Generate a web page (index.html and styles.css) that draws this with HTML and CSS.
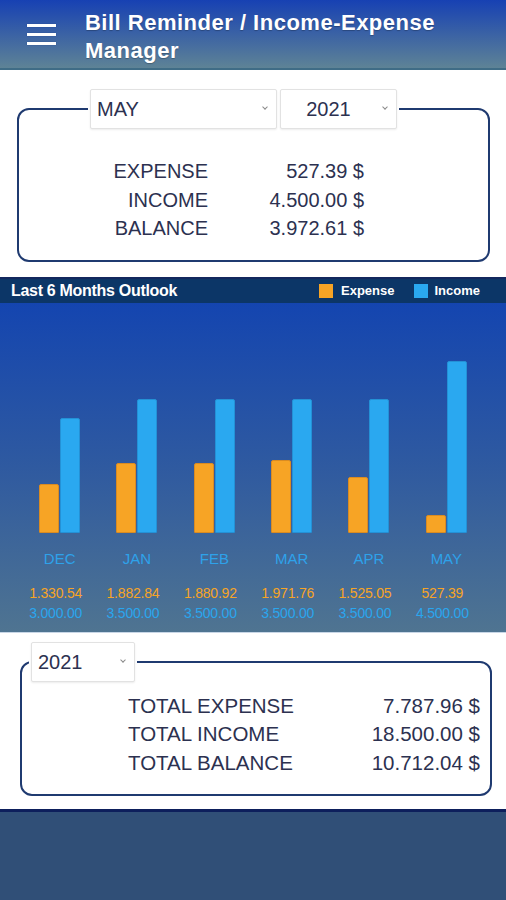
FILE: index.html
```html
<!DOCTYPE html>
<html lang="en">
<head>
  <meta charset="UTF-8">
  <meta name="viewport" content="width=device-width, initial-scale=1.0">
  <title>Bill Reminder / Income-Expense Manager</title>
  <link rel="stylesheet" href="styles.css">
</head>
<body>
  <header class="topbar">
    <div class="burger"><span></span><span></span><span></span></div>
    <h1>Bill Reminder / Income-Expense Manager</h1>
  </header>

  <section class="month-sec">
    <fieldset class="box box-month">
      <legend>
        <label class="pick pick-month">
          <select>
            <option>JAN</option><option>FEB</option><option>MAR</option>
            <option>APR</option><option selected>MAY</option><option>JUN</option>
          </select>
        </label>
        <label class="pick pick-year">
          <select><option>2020</option><option selected>2021</option></select>
        </label>
      </legend>
      <div class="sum sum-month">
        <span>EXPENSE</span><span>527.39 $</span>
        <span>INCOME</span><span>4.500.00 $</span>
        <span>BALANCE</span><span>3.972.61 $</span>
      </div>
    </fieldset>
  </section>

  <section class="outlook">
    <div class="outlook-head">
      <h2>Last 6 Months Outlook</h2>
      <div class="legend">
        <i class="dot dot-exp"></i><span>Expense</span>
        <i class="dot dot-inc"></i><span>Income</span>
      </div>
    </div>
    <div class="chart" id="chart"></div>
  </section>

  <section class="year-sec">
    <fieldset class="box box-year">
      <legend>
        <label class="pick pick-total">
          <select><option>2020</option><option selected>2021</option></select>
        </label>
      </legend>
      <div class="sum sum-year">
        <span>TOTAL EXPENSE</span><span>7.787.96 $</span>
        <span>TOTAL INCOME</span><span>18.500.00 $</span>
        <span>TOTAL BALANCE</span><span>10.712.04 $</span>
      </div>
    </fieldset>
  </section>

  <footer class="bottom"></footer>

  <script>
    const bulan = [
      { name: 'DEC', exp: 1330.54, inc: 3000, expTxt: '1.330.54', incTxt: '3.000.00' },
      { name: 'JAN', exp: 1882.84, inc: 3500, expTxt: '1.882.84', incTxt: '3.500.00' },
      { name: 'FEB', exp: 1880.92, inc: 3500, expTxt: '1.880.92', incTxt: '3.500.00' },
      { name: 'MAR', exp: 1971.76, inc: 3500, expTxt: '1.971.76', incTxt: '3.500.00' },
      { name: 'APR', exp: 1525.05, inc: 3500, expTxt: '1.525.05', incTxt: '3.500.00' },
      { name: 'MAY', exp: 527.39, inc: 4500, expTxt: '527.39', incTxt: '4.500.00' }
    ];

    // skala tinggi bar (px per unit)
    const skala = 0.0382;
    const chart = document.getElementById('chart');

    bulan.forEach(item => {
      chart.innerHTML += `<div class="col">
        <div class="bars">
          <div class="bar bar-exp" style="height:${Math.round(item.exp * skala) - 2}px"></div>
          <div class="bar bar-inc" style="height:${Math.round(item.inc * skala)}px"></div>
        </div>
        <div class="mname">${item.name}</div>
        <div class="val val-exp">${item.expTxt}</div>
        <div class="val val-inc">${item.incTxt}</div>
      </div>`;
    });
  </script>
</body>
</html>
```

FILE: styles.css
```css
body {
  margin: 0;
  font-family: "Liberation Sans", Arial, sans-serif;
  background-color: #ffffff;
  color: #2c3150;
}

/* header */
.topbar {
  height: 68px;
  display: flex;
  align-items: center;
  background: linear-gradient(to bottom, #1741b3, #5e8396);
  border-bottom: 2px solid #3f6c86;
}
.burger {
  width: 31px;
  margin-left: 27px;
  margin-right: 29px;
  display: flex;
  flex-direction: column;
  gap: 6px;
}
.burger span {
  height: 3px;
  background-color: #ffffff;
  box-shadow: 0 0 1px #0c2b7a;
}
.topbar h1 {
  margin: 6px 0 0;
  font-size: 22px;
  line-height: 28px;
  font-weight: bold;
  letter-spacing: 0.5px;
  color: #ffffff;
  text-shadow: 0 1px 1px rgba(0, 0, 0, 0.25);
}

/* kotak ringkasan */
.box {
  margin: 0;
  padding: 0;
  min-width: 0;
  border: 2px solid #1f3a70;
  border-radius: 12px;
}
.box legend {
  padding: 0 2px;
  display: flex;
  gap: 3px;
}
.pick {
  position: relative;
  display: block;
}
.pick select {
  appearance: none;
  -webkit-appearance: none;
  height: 40px;
  border: 1px solid #e2e2e2;
  border-radius: 2px;
  background-color: #ffffff;
  box-shadow: 0 1px 2px rgba(0, 0, 0, 0.08);
  font-family: "Liberation Sans", Arial, sans-serif;
  font-size: 20px;
  color: #2c3150;
  padding: 0 0 0 6px;
  outline: none;
}
.pick::after {
  content: "";
  position: absolute;
  top: 16px;
  right: 10px;
  width: 3px;
  height: 3px;
  border-right: 1px solid #8a8a8a;
  border-bottom: 1px solid #8a8a8a;
  transform: rotate(45deg);
}
.pick-month select { width: 187px; }
.pick-year select {
  width: 117px;
  text-align-last: center;
  padding: 0 20px 0 0;
}
.pick-total select { width: 104px; }

.sum {
  display: grid;
  font-size: 20px;
  line-height: 28.5px;
  color: #2c3150;
}
.sum span:nth-child(even) { text-align: right; }

.month-sec {
  padding: 19px 16px 15px 17px;
}
.box-month legend { margin-left: 69px; }
.sum-month {
  grid-template-columns: 189px 156px;
  padding: 28px 0 17px;
}
.sum-month span:nth-child(odd) { text-align: right; }

/* grafik */
.outlook {
  border-top: 2px solid #13285e;
}
.outlook-head {
  height: 24px;
  display: flex;
  align-items: center;
  justify-content: space-between;
  padding: 0 26px 0 11px;
  background-color: #0c3667;
}
.outlook-head h2 {
  margin: 0;
  font-size: 16px;
  letter-spacing: -0.3px;
  color: #ffffff;
}
.legend {
  display: flex;
  align-items: center;
  font-size: 13px;
  font-weight: bold;
  color: #ffffff;
}
.dot {
  width: 14px;
  height: 14px;
  margin-right: 8px;
}
.dot-exp { background-color: #f7a425; }
.dot-inc { background-color: #2aa8f0; margin-left: 20px; margin-right: 6px; }

.chart {
  display: grid;
  grid-template-columns: repeat(6, 1fr);
  padding: 0 21px 9px;
  background: linear-gradient(to bottom, #1445b0, #2f5aa0 50%, #4f7491);
  border-bottom: 1px solid #c8d6e6;
}
.col {
  display: flex;
  flex-direction: column;
  align-items: center;
}
.bars {
  height: 230px;
  display: flex;
  align-items: flex-end;
  gap: 1px;
}
.bar {
  width: 20px;
  border-radius: 2px 2px 1px 1px;
  box-sizing: border-box;
}
.bar-exp { background-color: #f7a425; border: 1px solid #d98b22; }
.bar-inc { background-color: #2aa8f0; border: 1px solid #2491d6; }
.mname {
  margin-top: 16px;
  font-size: 15px;
  line-height: 20px;
  color: #2ea2ea;
}
.val {
  font-size: 14px;
  line-height: 20px;
  letter-spacing: -0.2px;
  padding-right: 8px;
}
.mname + .val { margin-top: 14px; }
.val-exp { color: #f7a425; }
.val-inc { color: #2aa6ee; }

/* total tahunan */
.year-sec {
  padding: 9px 14px 13px 20px;
}
.box-year legend { margin-left: 7px; }
.sum-year {
  grid-template-columns: 1fr auto;
  font-size: 20.5px;
  padding: 10px 10px 17px 106px;
}

.bottom {
  height: 88px;
  border-top: 3px solid #0d1f5c;
  background-color: #304f77;
}
```
